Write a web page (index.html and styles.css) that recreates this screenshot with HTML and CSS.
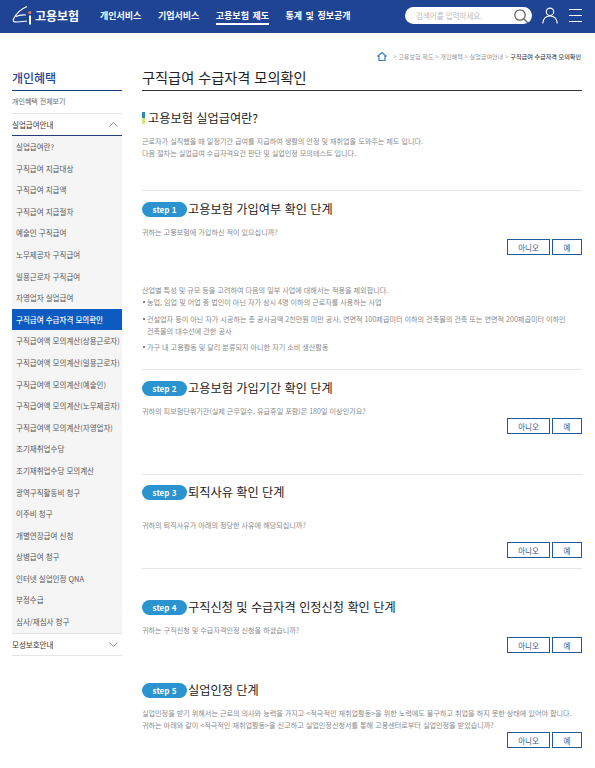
FILE: index.html
```html
<!DOCTYPE html>
<html lang="ko">
<head>
    <meta charset="UTF-8">
    <title>구직급여 수급자격 모의확인</title>
    <link rel="stylesheet" href="styles.css">
</head>
<body>

    <header class="top">
        <div class="logo">
            <svg class="logo-mark" width="21" height="20" viewBox="0 0 21 20">
                <path d="M15 .5C9 3 4 8 1.500 13C.5 15.500 2 16 5 16C8 16 11 15.500 15 15M4 10.500C7 9 10 8.500 14 9" fill="none" stroke="#fff" stroke-width="1.100"/>
                <circle cx="17.800" cy="6.500" r="1.600" fill="#e8764a"/>
                <rect x="17" y="9.500" width="2" height="9" fill="#fff"/>
            </svg>
            <span class="logo-text">고용보험</span>
        </div>
        <nav class="gnb">
            <a href="#">개인서비스</a>
            <a href="#">기업서비스</a>
            <a href="#" class="on">고용보험 제도</a>
            <a href="#">통계 및 정보공개</a>
        </nav>
        <div class="search">
            <span>검색어를 입력하세요.</span>
            <svg width="16" height="16" viewBox="0 0 16 16">
                <circle cx="7" cy="7" r="5.200" fill="none" stroke="#666" stroke-width="1.300"/>
                <path d="M11 11L15 15" stroke="#666" stroke-width="1.500"/>
            </svg>
        </div>
        <svg class="user-icon" width="16" height="17" viewBox="0 0 16 17">
            <circle cx="8" cy="4.800" r="3.700" fill="none" stroke="#fff" stroke-width="1.100"/>
            <path d="M.7 16.500C1.200 11.500 4 9 8 9S14.800 11.500 15.300 16.500" fill="none" stroke="#fff" stroke-width="1.100"/>
        </svg>
        <div class="menu-icon"><i></i><i></i><i></i></div>
    </header>

    <div class="wrap">
        <aside class="side">
            <h2>개인혜택</h2>
            <a href="#" class="side-all">개인혜택 전체보기</a>
            <div class="side-head open">
                <span>실업급여안내</span>
                <svg width="9" height="5" viewBox="0 0 9 5"><path d="M.5 4.500L4.500 .5L8.500 4.500" fill="none" stroke="#777" stroke-width=".8"/></svg>
            </div>
            <ul class="side-sub">
                <li>실업급여란?</li>
                <li>구직급여 지급대상</li>
                <li>구직급여 지급액</li>
                <li>구직급여 지급절차</li>
                <li>예술인 구직급여</li>
                <li>노무제공자 구직급여</li>
                <li>일용근로자 구직급여</li>
                <li>자영업자 실업급여</li>
                <li class="on">구직급여 수급자격 모의확인</li>
                <li>구직급여액 모의계산(상용근로자)</li>
                <li>구직급여액 모의계산(일용근로자)</li>
                <li>구직급여액 모의계산(예술인)</li>
                <li>구직급여액 모의계산(노무제공자)</li>
                <li>구직급여액 모의계산(자영업자)</li>
                <li>조기재취업수당</li>
                <li>조기재취업수당 모의계산</li>
                <li>광역구직활동비 청구</li>
                <li>이주비 청구</li>
                <li>개별연장급여 신청</li>
                <li>상병급여 청구</li>
                <li>인터넷 실업인정 QNA</li>
                <li>부정수급</li>
                <li>심사/재심사 청구</li>
            </ul>
            <div class="side-head">
                <span>모성보호안내</span>
                <svg width="9" height="5" viewBox="0 0 9 5"><path d="M.5 .5L4.500 4.500L8.500 .5" fill="none" stroke="#777" stroke-width=".8"/></svg>
            </div>
        </aside>

        <main class="content">
            <div class="crumb">
                <svg class="home" width="10" height="9" viewBox="0 0 10 9"><path d="M.5 4.500L5 .5L9.500 4.500M2 4V8.500H8V4" fill="none" stroke="#2f7fc1" stroke-width="1.200"/></svg>
                <span>&gt; 고용보험 제도 &gt; 개인혜택 &gt; 실업급여안내 &gt;</span>
                <strong>구직급여 수급자격 모의확인</strong>
            </div>
            <h1>구직급여 수급자격 모의확인</h1>

            <section class="intro">
                <h3><i class="mark"></i>고용보험 실업급여란?</h3>
                <p>근로자가 실직했을 때 일정기간 급여를 지급하여 생활의 안정 및 재취업을 도와주는 제도 입니다.<br>다음 절차는 실업급여 수급자격요건 판단 및 실업인정 모의테스트 입니다.</p>
            </section>

            <section class="step step1">
                <h3><span class="pill">step 1</span>고용보험 가입여부 확인 단계</h3>
                <p>귀하는 고용보험에 가입하신 적이 있으십니까?</p>
                <div class="btns"><button>아니오</button><button class="yes">예</button></div>
                <div class="note">
                    <p>산업별 특성 및 규모 등을 고려하여 다음의 일부 사업에 대해서는 적용을 제외합니다.</p>
                    <ul>
                        <li>농업, 임업 및 어업 중 법인이 아닌 자가 상시 4명 이하의 근로자를 사용하는 사업</li>
                        <li>건설업자 등이 아닌 자가 시공하는 총 공사금액 2천만원 미만 공사, 연면적 100제곱미터 이하의 건축물의 건축 또는 연면적 200제곱미터 이하인 건축물의 대수선에 관한 공사</li>
                        <li>가구 내 고용활동 및 달리 분류되지 아니한 자기 소비 생산활동</li>
                    </ul>
                </div>
            </section>

            <section class="step step2">
                <h3><span class="pill">step 2</span>고용보험 가입기간 확인 단계</h3>
                <p>귀하의 피보험단위기간(실제 근무일수, 유급휴일 포함)은 180일 이상인가요?</p>
                <div class="btns"><button>아니오</button><button class="yes">예</button></div>
            </section>

            <section class="step step3">
                <h3><span class="pill">step 3</span>퇴직사유 확인 단계</h3>
                <p>귀하의 퇴직사유가 아래의 정당한 사유에 해당되십니까?</p>
                <div class="btns"><button>아니오</button><button class="yes">예</button></div>
            </section>

            <section class="step step4">
                <h3><span class="pill">step 4</span>구직신청 및 수급자격 인정신청 확인 단계</h3>
                <p>귀하는 구직신청 및 수급자격인정 신청을 하셨습니까?</p>
                <div class="btns"><button>아니오</button><button class="yes">예</button></div>
            </section>

            <section class="step step5">
                <h3><span class="pill">step 5</span>실업인정 단계</h3>
                <p>실업인정을 받기 위해서는 근로의 의사와 능력을 가지고 &lt;적극적인 재취업활동&gt;을 위한 노력에도 불구하고 취업을 하지 못한 상태에 있어야 합니다.<br>귀하는 아래와 같이 &lt;적극적인 재취업활동&gt;을 신고하고 실업인정신청서를 통해 고용센터로부터 실업인정을 받았습니까?</p>
                <div class="btns"><button>아니오</button><button class="yes">예</button></div>
            </section>
        </main>
    </div>

</body>
</html>
```

FILE: styles.css
```css
* {
    margin: 0;
    padding: 0;
    box-sizing: border-box;
    font-family: "Noto Sans CJK KR", "Noto Sans", sans-serif;
}

body {
    background: #fff;
    color: #333;
    width: 595px;
    height: 768px;
    overflow: hidden;
}

a {
    text-decoration: none;
    color: inherit;
}

ul {
    list-style: none;
}


.top {
    height: 33px;
    background: #1e4493;
    display: flex;
    align-items: center;
    color: #fff;
    padding: 0 0 2px 12px;
}

.logo {
    display: flex;
    align-items: center;
    width: 88px;
}

.logo-text {
    font-size: 12px;
    font-weight: 700;
    margin-left: 2px;
}

.gnb {
    display: flex;
    gap: 16.500px;
    font-size: 9px;
    font-weight: 700;
    line-height: 13px;
    word-spacing: 1px;
}

.gnb a {
    padding: 2px 0 1px;
    border-bottom: 2px solid transparent;
}

.gnb a.on {
    border-bottom-color: #fff;
}

.search {
    width: 127px;
    height: 17px;
    margin-left: 54.500px;
    background: #fff;
    border-radius: 9px;
    display: flex;
    align-items: center;
    justify-content: space-between;
    padding: 0 3px 0 11px;
    color: #bbb;
    font-size: 7.500px;
}

.user-icon {
    margin-left: 10px;
}

.menu-icon {
    margin-left: 11px;
    width: 13px;
    height: 13px;
    display: flex;
    flex-direction: column;
    justify-content: space-between;
}

.menu-icon i {
    display: block;
    height: 1px;
    background: #fff;
}


.wrap {
    display: flex;
    padding-left: 12px;
}

.side {
    width: 110px;
    margin-top: 35px;
}

.side h2 {
    font-size: 12px;
    font-weight: 500;
    color: #1e4493;
    height: 23px;
    line-height: 20px;
    border-bottom: 1px solid #1e3f7c;
}

.side-all {
    display: block;
    font-size: 7px;
    color: #666;
    height: 23px;
    line-height: 21px;
    border-bottom: 1px solid #e5e5e5;
}

.side-head {
    height: 22px;
    display: flex;
    justify-content: space-between;
    align-items: center;
    padding-right: 4px;
    font-size: 7.500px;
    color: #333;
    border-bottom: 1px solid #e5e5e5;
}

.side-head.open {
    border-bottom-color: #1e3f7c;
}

.side-sub {
    background: #f5f5f5;
    border-bottom: 1px solid #e5e5e5;
}

.side-sub li {
    height: 21.600px;
    line-height: 21.600px;
    padding-left: 4px;
    font-size: 7.500px;
    color: #555;
    white-space: nowrap;
    overflow: hidden;
}

.side-sub li.on {
    background: #0b5bc0;
    color: #fff;
    font-weight: 500;
}


.content {
    width: 440px;
    margin-left: 20px;
}

.crumb {
    height: 36px;
    padding: 14px 1px 4px 0;
    display: flex;
    justify-content: flex-end;
    align-items: center;
    gap: 2px;
    font-size: 6.100px;
    color: #999;
}

.home {
    margin-right: 4px;
}

.crumb strong {
    font-weight: 500;
    color: #444;
}

h1 {
    font-size: 14.200px;
    font-weight: 400;
    color: #222;
    height: 22px;
    line-height: 17px;
    border-bottom: 1px solid #333;
}

.intro {
    height: 100px;
    padding-top: 18px;
    border-bottom: 1px solid #e5e5e5;
}

.intro h3,
.step h3 {
    display: flex;
    font-size: 12.200px;
    font-weight: 400;
    color: #222;
    height: 18px;
}

.intro h3 {
    align-items: center;
}

.mark {
    width: 3px;
    height: 12px;
    margin-right: 3px;
    background: linear-gradient(#2a86bd 50%, #d8e27a 50%);
}

.intro p {
    margin-top: 8px;
}

.content p,
.note li {
    font-size: 7.120px;
    line-height: 12px;
    color: #8a8a8a;
}

.step {
    padding-top: 11px;
}

.step h3 {
    height: 16px;
    line-height: 14px;
    align-items: flex-start;
}

.step > p {
    margin-top: 8px;
}

.pill {
    width: 45px;
    height: 15px;
    margin-right: 1px;
    border-radius: 8px;
    background: #2b93cf;
    color: #fff;
    font-size: 8px;
    font-weight: 700;
    line-height: 15px;
    text-align: center;
}

.btns {
    display: flex;
    justify-content: flex-end;
    gap: 2px;
    margin-top: 1px;
}

.btns button {
    width: 43px;
    height: 16px;
    border: 1px solid #1e5a9c;
    background: #fff;
    color: #36558c;
    font-size: 7.500px;
}

.btns button.yes {
    width: 30px;
}

.note {
    margin-top: 29px;
}

.note li {
    padding: 0 10px 0 5px;
    margin-top: 4.500px;
    position: relative;
}

.note li:first-child {
    margin-top: 0;
}

.note li::before {
    content: "";
    position: absolute;
    left: 1px;
    top: 5px;
    width: 2px;
    height: 2px;
    border-radius: 50%;
    background: #555;
}

.step1 {
    height: 179px;
    border-bottom: 1px solid #e5e5e5;
}

.step2 {
    height: 105px;
    border-bottom: 1px solid #e5e5e5;
}

.step3 {
    height: 94px;
    padding-top: 10px;
    border-bottom: 1px solid #e5e5e5;
}

.step3 > p {
    margin-top: 18px;
}

.step3 .btns {
    margin-top: 11px;
}

.step4 {
    height: 103px;
    padding-top: 31px;
}
```
